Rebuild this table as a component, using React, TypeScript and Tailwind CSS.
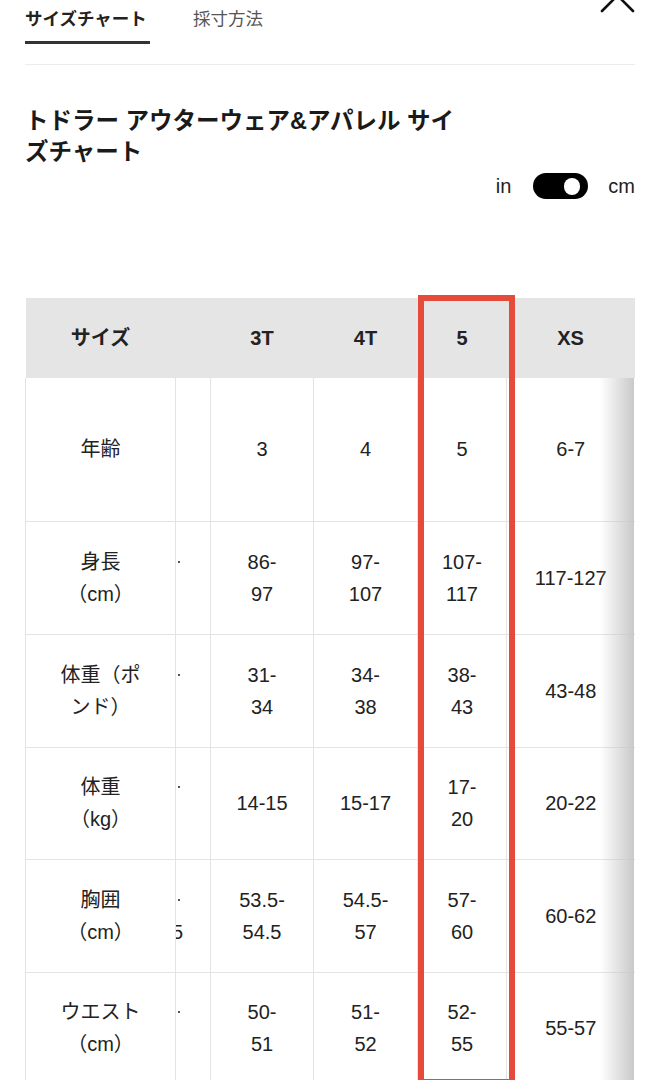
import React from "react";

type Row = { label: string; h: string; vals: string[]; dot: boolean; clip?: string };

const rows: Row[] = [
  { label: "年齢", h: "h-[143px]", vals: ["3", "4", "5", "6-7"], dot: false },
  { label: "身長\n（cm）", h: "h-[113px]", vals: ["86-\n97", "97-\n107", "107-\n117", "117-127"], dot: true },
  { label: "体重（ポ\nンド）", h: "h-[113px]", vals: ["31-\n34", "34-\n38", "38-\n43", "43-48"], dot: true },
  { label: "体重\n（kg）", h: "h-[112px]", vals: ["14-15", "15-17", "17-\n20", "20-22"], dot: true },
  { label: "胸囲\n（cm）", h: "h-[113px]", vals: ["53.5-\n54.5", "54.5-\n57", "57-\n60", "60-62"], dot: true, clip: "5" },
  { label: "ウエスト\n（cm）", h: "h-[112px]", vals: ["50-\n51", "51-\n52", "52-\n55", "55-57"], dot: true },
];

export default function App() {
  return (
    <div className="relative h-[1080px] w-[660px] overflow-hidden bg-white px-[25px] font-['Liberation_Sans','Noto_Sans_CJK_JP',sans-serif] text-[#222]">
      {/* tabs */}
      <div className="relative flex items-start gap-[43px] pt-[7px]">
        <div className="flex w-[125px] flex-col">
          <span className="whitespace-nowrap text-[17.5px] leading-[24px] font-bold text-[#222]">サイズチャート</span>
          <div className="mt-[10px] h-[3px] w-full bg-[#333]" />
        </div>
        <span className="whitespace-nowrap text-[17.5px] leading-[24px] text-[#555]">採寸方法</span>
        <svg
          className="absolute right-[2px] top-[-20px] h-[31px] w-[31px] overflow-visible"
          viewBox="0 0 31 31"
          fill="none"
          stroke="#111"
          strokeWidth="2.6"
          strokeLinecap="round"
        >
          <line x1="0" y1="0" x2="31" y2="31" />
          <line x1="31" y1="0" x2="0" y2="31" />
        </svg>
      </div>
      <div className="mt-[20px] h-px w-full bg-[#ececec]" />

      {/* title */}
      <h1 className="mt-[41px] w-[440px] text-[23.5px] leading-[31px] font-bold text-[#1a1a1a]">
        トドラー アウターウェア&amp;アパレル サイズチャート
      </h1>

      {/* unit toggle */}
      <div className="mt-[5px] flex h-[26px] items-center justify-end">
        <span className="text-[20px] leading-none">in</span>
        <div className="ml-[22px] flex h-[26px] w-[55px] items-center justify-end rounded-full bg-black pr-[8px]">
          <div className="h-[17px] w-[16px] rounded-full bg-white" />
        </div>
        <span className="ml-[20px] text-[20px] leading-none">cm</span>
      </div>

      {/* table */}
      <div className="relative mt-[99px] w-[610px]">
        <table className="w-[609px] table-fixed border-collapse text-center text-[20px]">
          <colgroup>
            <col className="w-[150px]" />
            <col className="w-[35px]" />
            <col className="w-[103px]" />
            <col className="w-[104px]" />
            <col className="w-[89px]" />
            <col className="w-[128px]" />
          </colgroup>
          <thead>
            <tr className="h-[80px] bg-[#e5e5e5]">
              <th className="font-bold">サイズ</th>
              <th />
              <th className="font-bold">3T</th>
              <th className="font-bold">4T</th>
              <th className="font-bold">5</th>
              <th className="font-bold">XS</th>
            </tr>
          </thead>
          <tbody>
            {rows.map((r, i) => (
              <tr key={i} className={r.h}>
                <td className="border-b border-l border-[#e3e3e3] leading-[32px] whitespace-pre-line">{r.label}</td>
                <td className="overflow-hidden border-b border-l border-[#e3e3e3] p-0 text-left">
                  {r.dot && (
                    <div className="flex flex-col">
                      <div className="flex h-[32px] items-center">
                        <span className="ml-[2px] h-[2px] w-[2px] bg-[#555]" />
                      </div>
                      <div className="h-[32px] leading-[32px]">
                        {r.clip && <span className="ml-[-4px]">{r.clip}</span>}
                      </div>
                    </div>
                  )}
                </td>
                {r.vals.map((v, j) => (
                  <td key={j} className="border-b border-l border-[#e3e3e3] leading-[32px] whitespace-pre-line">
                    {v}
                  </td>
                ))}
              </tr>
            ))}
          </tbody>
        </table>
        {/* right scroll shadow */}
        <div className="pointer-events-none absolute top-[80px] right-[1px] bottom-0 w-[34px] bg-linear-to-r from-white/0 to-[#c9c9c9]" />
        {/* red highlight */}
        <div className="pointer-events-none absolute top-[-3px] left-[393px] h-[790px] w-[97px] border-[6px] border-[#e64a3a]" />
      </div>
    </div>
  );
}
